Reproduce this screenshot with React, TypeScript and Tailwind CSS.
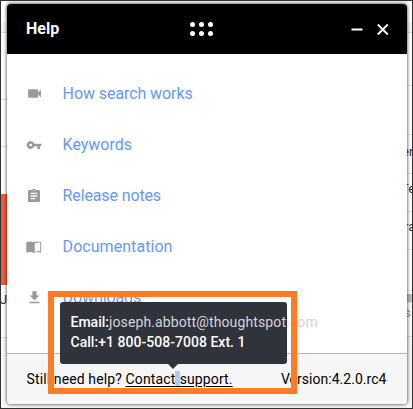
import React from "react";
import { MdVideocam, MdVpnKey, MdAssignment, MdFileDownload } from "react-icons/md";

function BookIcon() {
  return (
    <svg width="16" height="16" viewBox="0 0 16 16">
      <path d="M.3 3.2C3 2.1 6 2.1 7.7 3.2 10 2.1 13 2.1 15.2 3.2V13.7C13 12.8 10 12.8 7.7 13.9 6 12.8 3 12.8.3 13.7Z" fill="#999" />
      <path d="M8.7 4.2C11 3.4 13 3.3 14.2 3.9V12.2C13 11.8 11 11.9 8.7 12.7Z" fill="#fff" />
    </svg>
  );
}

const links = [
  { label: "How search works", icon: <MdVideocam size={17} />, spacing: "tracking-[-0.08px]" },
  { label: "Keywords", icon: <MdVpnKey size={16} />, spacing: "tracking-[-0.02px]" },
  { label: "Release notes", icon: <MdAssignment size={16} />, spacing: "tracking-[-0.13px]" },
  { label: "Documentation", icon: <BookIcon />, spacing: "tracking-[0.05px]" },
  { label: "Downloads", icon: <MdFileDownload size={17} />, spacing: "tracking-[-0.1px]" },
];

function LeftEdge() {
  return (
    <div className="flex w-[6px] shrink-0 flex-col overflow-hidden bg-white text-[13px] leading-[14px] text-[#333]">
      <div className="h-[21px] shrink-0" />
      <div className="h-[11px] shrink-0 border-b border-[#ddd] bg-[#f5f5f5]" />
      <div className="h-[67px] shrink-0 border-b border-[#ddd]" />
      <div className="h-[47px] shrink-0 border-b border-[#ddd]" />
      <div className="h-[47px] shrink-0" />
      <div className="h-[91px] shrink-0 bg-[#fc5638]" />
      <div className="h-[53px] shrink-0 border-b border-[#ddd] pt-[8px]"><span className="-ml-[1px]">Ja</span></div>
      <div className="grow bg-[#fafafa]" />
    </div>
  );
}

function RightEdge() {
  return (
    <div className="flex w-[5px] shrink-0 flex-col overflow-hidden bg-white text-[13px] leading-[14px] text-[#333]">
      <div className="h-[21px] shrink-0" />
      <div className="h-[11px] shrink-0 border-b border-[#ddd] bg-[#f5f5f5]" />
      <div className="h-[53px] shrink-0 border-b border-[#e5e5e5]" />
      <div className="h-[49px] shrink-0 border-b border-[#e5e5e5]" />
      <div className="h-[39px] shrink-0 border-b border-[#e5e5e5] pt-[10px]"><span className="-ml-[5px]">er</span></div>
      <div className="h-[38px] shrink-0 border-b border-[#e5e5e5] pt-[8px]"><span className="-ml-[6px]">Te</span></div>
      <div className="h-[38px] shrink-0 border-b border-[#e5e5e5] pt-[8px]"><span className="-ml-[3px]">ra</span></div>
      <div className="h-[41px] shrink-0 border-b border-[#e5e5e5]" />
      <div className="h-[3px] shrink-0" />
      <div className="h-[8px] shrink-0 bg-[#bbb]" />
      <div className="h-[35px] shrink-0 border-y border-[#ddd] bg-[#f9f9f9] pt-[3px] text-[#89949f]"><span className="-ml-[3px]">s</span></div>
      <div className="grow bg-[#f5f5f5]" />
    </div>
  );
}

export default function App() {
  return (
    <div className="relative flex h-[409px] w-[413px] overflow-hidden border border-[#343136] bg-[#f5f5f5] font-['Roboto',sans-serif]">
      <LeftEdge />
      <section className="z-10 mt-[3px] flex h-[400px] w-[400px] shrink-0 flex-col overflow-hidden rounded-[4px] bg-white shadow-[0_0_3px_1px_rgba(0,0,0,0.5)]">
        <header className="flex h-[50px] shrink-0 items-center bg-black pl-[19px] text-white">
          <h1 className="w-[164px] text-[16px] leading-[20px] font-bold">Help</h1>
          <div className="grid grid-cols-3 gap-[4px]">
            {[0, 1, 2, 3, 4, 5].map((n) => (
              <span key={n} className="size-[5px] rounded-full bg-white" />
            ))}
          </div>
          <svg className="ml-[138px]" width="39" height="14" viewBox="0 0 39 14" fill="none" stroke="#fff" strokeWidth="2">
            <path d="M.5 7.5h11" />
            <path d="M26.8 2.5l10 10M36.8 2.5l-10 10" strokeWidth="1.8" />
          </svg>
        </header>
        <nav className="flex h-[299px] shrink-0 flex-col pt-[14px]">
          {links.map((link) => (
            <a key={link.label} className="flex h-[51px] shrink-0 items-center pl-[19px] text-[#6699f3]">
              <span className="flex w-[36.6px] text-[#999]">{link.icon}</span>
              <span className={`text-[16px] leading-[20px] ${link.spacing}`}>{link.label}</span>
            </a>
          ))}
        </nav>
        <footer className="flex h-[51px] shrink-0 items-center justify-between border-t border-[#b5b5b5] bg-[#f6f6f6] pr-[20.5px] pl-[19.5px] text-[14px] leading-[18px] whitespace-pre text-black">
          <span className="tracking-[0.12px]">Still need help? <u className="underline-offset-2">Contact<mark className="bg-[#abcdfa] tracking-[0.8px] text-black">{" "}</mark>support.</u></span>
          <span className="tracking-[0.03px]">Version:4.2.0.rc4</span>
        </footer>
      </section>
      <RightEdge />
      <div className="absolute top-[301px] left-[59px] z-20 h-[62px] w-[227px] rounded-[3px] bg-[#30323c] pt-[10px] pl-[10.5px] text-[14px] leading-[20px] whitespace-nowrap text-white">
        <div><b className="font-medium">Email:</b><span className="tracking-[0.12px] text-[#d4d5da]">joseph.abbott@thoughtspot.com</span></div>
        <div className="font-medium tracking-[0.03px]">Call:+1 800-508-7008 Ext. 1</div>
        <svg className="absolute top-[61px] left-[107px]" width="12" height="7"><path d="M0 0h12L6 6Z" fill="#30323c" /></svg>
      </div>
      <div className="absolute top-[290px] left-[47px] z-30 h-[103px] w-[249px] border-[6px] border-[#ff7c24]" />
    </div>
  );
}
